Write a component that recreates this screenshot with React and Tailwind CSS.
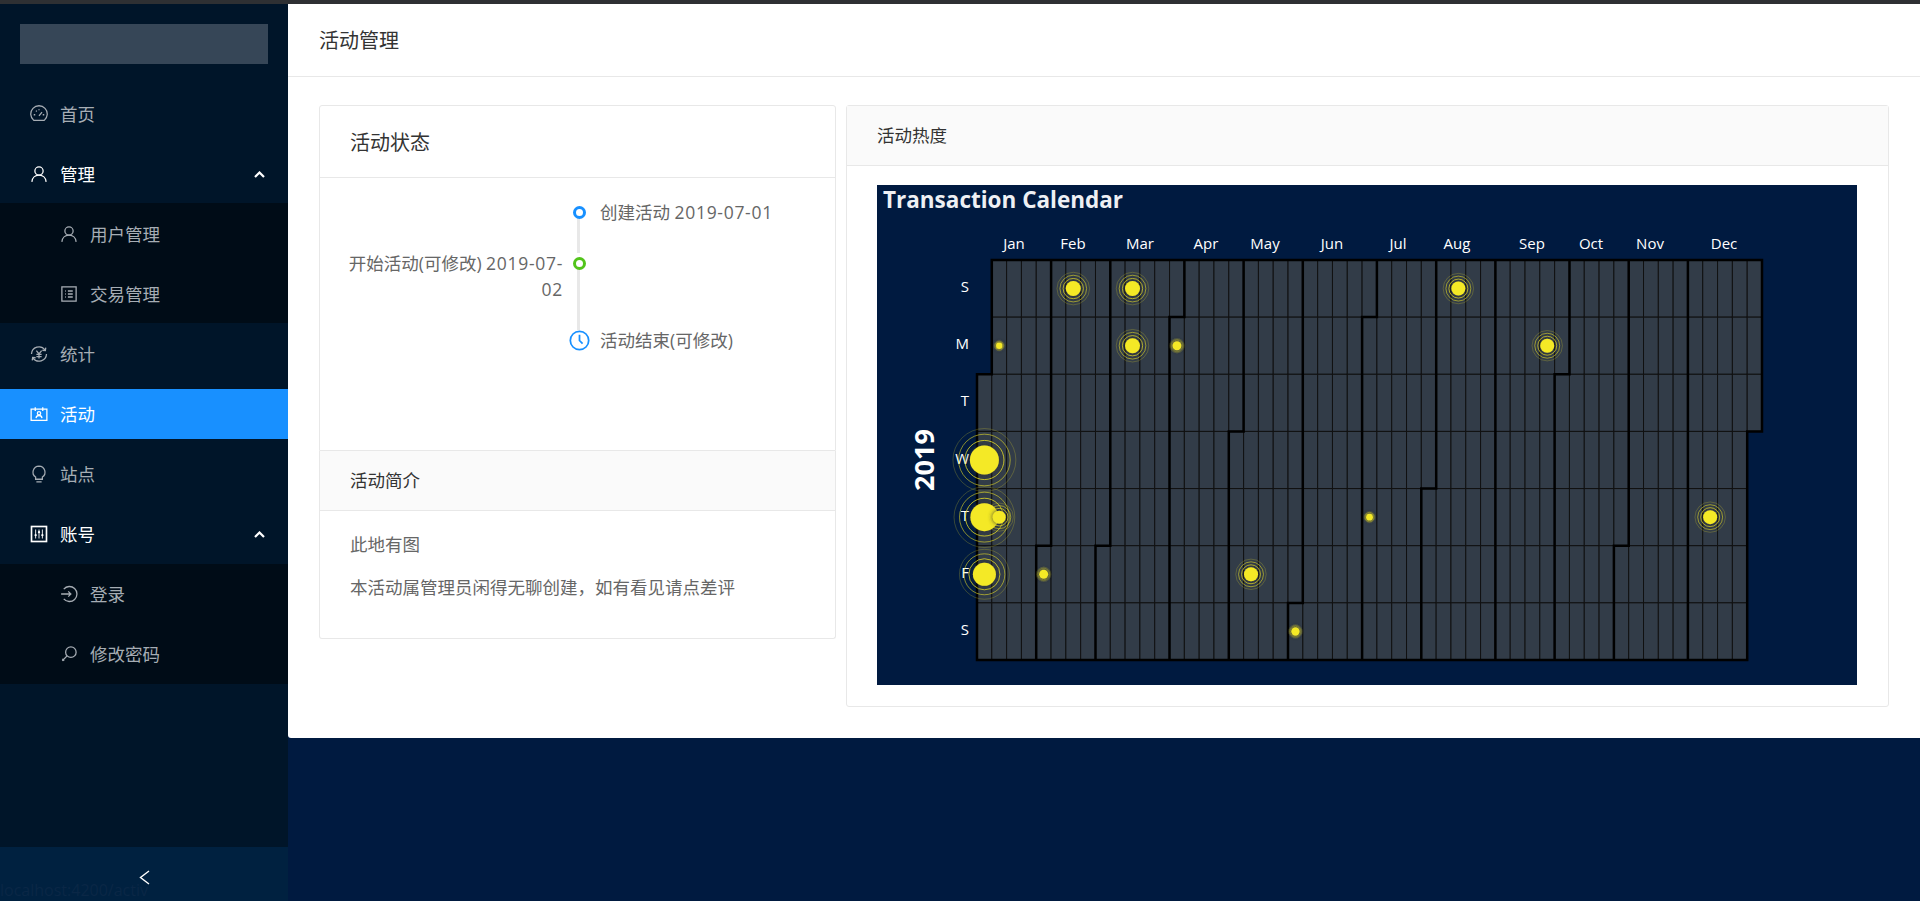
import React from 'react';

const FONT = "font-['Open_Sans','Noto_Sans_CJK_SC',sans-serif]";

const Icon = ({ children, size = 18 }) => (
  <svg
    width={size}
    height={size}
    viewBox="0 0 24 24"
    fill="none"
    stroke="currentColor"
    strokeWidth="1.7"
    className="shrink-0"
  >
    {children}
  </svg>
);

const icons = {
  dashboard: (
    <>
      <path d="M5 20.5A11 11 0 1 1 19 20.5Z" />
      <path d="M12 14.5l4-5M5 13h2M17 13h2M8 7.5l1 1.2M12 5.5v1.5" />
    </>
  ),
  user: (
    <>
      <circle cx="12" cy="8" r="5.5" />
      <path d="M2.5 22.5c.4-5.5 4.4-9 9.5-9s9.100 3.500 9.500 9" />
    </>
  ),
  profile: (
    <>
      <rect x="2.500" y="2.500" width="19" height="19" />
      <path d="M10.500 8h6.500M10.500 12h6.500M10.500 16h6.500M7 8h1M7 12h1M7 16h1" />
    </>
  ),
  transaction: (
    <>
      <path d="M2 12A10 10 0 0 1 20 6.500M22 12A10 10 0 0 1 4 17.500" />
      <path d="M16.500 7l4 .5.5-4M7.500 17l-4-.5-.5 4" />
      <path d="M8.500 7.500L12 12l3.500-4.500M12 12v6M8.500 12.500h7M8.500 15.500h7" />
    </>
  ),
  contacts: (
    <>
      <rect x="1.500" y="5.500" width="21" height="15" />
      <path d="M7 3v5M17 3v5" />
      <circle cx="12" cy="11" r="2.200" />
      <path d="M8 17.500c.3-2.200 2-3.500 4-3.500s3.700 1.300 4 3.500" />
    </>
  ),
  bulb: (
    <>
      <path d="M12 1.500a8 8 0 0 0-4.500 14.600V19h9v-2.900A8 8 0 0 0 12 1.500z" />
      <path d="M8.500 22.500h7" />
    </>
  ),
  control: (
    <>
      <rect x="2" y="2" width="20" height="20" strokeWidth="2.200" />
      <path d="M7.500 6v12M12 6v12M16.500 6v12" strokeWidth="1.200" />
      <circle cx="7.500" cy="13.500" r="1.500" fill="currentColor" stroke="none" />
      <circle cx="12" cy="9.500" r="1.500" fill="currentColor" stroke="none" />
      <circle cx="16.500" cy="13.500" r="1.500" fill="currentColor" stroke="none" />
    </>
  ),
  login: (
    <>
      <path d="M5 5.500a10 10 0 1 1 0 13" />
      <path d="M1.500 12h13M11 8.500l3.500 3.500-3.500 3.500" />
    </>
  ),
  key: (
    <>
      <circle cx="14.500" cy="9.500" r="7" />
      <path d="M9.500 14.500L3 21M3 18.500l2.500 2.500" />
    </>
  ),
};

const ChevronUp = () => (
  <svg width="11" height="7" viewBox="0 0 11 7" fill="none" stroke="currentColor" strokeWidth="2.200" className="ml-auto mr-[23px]">
    <path d="M1 6l4.500-4.500L10 6" />
  </svg>
);

const MenuItem = ({ icon, label, active, open, sub, chevron, className = '' }) => (
  <div
    className={`h-[50px] flex items-center ${sub ? 'pl-[60px]' : 'pl-[30px]'} ${
      active ? 'bg-[#1890ff] text-white' : open ? 'text-white' : 'text-[#a6adb4]'
    } ${className}`}
  >
    <Icon>{icons[icon]}</Icon>
    <span className="ml-[12px] text-[17.5px] leading-[26px]">{label}</span>
    {chevron && <ChevronUp />}
  </div>
);

const Sidebar = () => (
  <aside className="w-[288px] shrink-0 bg-[#001529] flex flex-col">
    <div className="mt-[20px] mx-[20px] h-[40px] bg-[#364657]" />
    <nav className="mt-[25px] flex flex-col">
      <MenuItem icon="dashboard" label="首页" />
      <MenuItem icon="user" label="管理" open chevron className="mt-[10px]" />
      <div className="mt-[4px] bg-[#000c17] pt-[6px] pb-[4px] flex flex-col gap-[10px]">
        <MenuItem icon="user" label="用户管理" sub />
        <MenuItem icon="profile" label="交易管理" sub />
      </div>
      <MenuItem icon="transaction" label="统计" className="mt-[6px]" />
      <MenuItem icon="contacts" label="活动" active className="mt-[10px]" />
      <MenuItem icon="bulb" label="站点" className="mt-[10px]" />
      <MenuItem icon="control" label="账号" open chevron className="mt-[10px]" />
      <div className="mt-[5px] bg-[#000c17] pt-[5px] pb-[5px] flex flex-col gap-[10px]">
        <MenuItem icon="login" label="登录" sub />
        <MenuItem icon="key" label="修改密码" sub />
      </div>
    </nav>
    <div className="mt-auto h-[54px] bg-[#002140] flex items-start justify-center text-white pt-[23px]">
      <svg width="11" height="15" viewBox="0 0 11 15" fill="none" stroke="currentColor" strokeWidth="1.400">
        <path d="M10 1L1.500 7.500 10 14" />
      </svg>
    </div>
  </aside>
);

const TimelineItem = ({ left, right, dot, tail, pb = true }) => (
  <div className={`flex text-[17.5px] leading-[26px] text-[#666] ${pb ? 'pb-[25px]' : ''}`}>
    <div className="w-[217px] text-right shrink-0">{left}</div>
    <div className="w-[32px] shrink-0 relative flex justify-center">
      {tail && <div className="absolute left-[14px] top-[18px] bottom-[-28px] w-[3px] bg-[#e8e8e8]" />}
      <div className="relative">{dot}</div>
    </div>
    <div className="pl-[5px]">{right}</div>
  </div>
);

const Dot = ({ color }) => (
  <div className={`mt-[7px] w-[13px] h-[13px] rounded-full border-[3px] bg-white ${color}`} />
);

const ClockDot = () => (
  <svg width="21" height="21" viewBox="0 0 24 24" fill="none" stroke="#1890ff" strokeWidth="2" className="mt-[3px] bg-white">
    <circle cx="12" cy="12" r="10.500" />
    <path d="M12 5.500V12l3.500 3.500" />
  </svg>
);

const DateText = ({ children }) => <span className="tracking-[0.7px]">{children}</span>;

// echarts-like calendar, coordinates are page pixels (see viewBox)
const X0 = 977;
const Y0 = 260;
const CW = 785 / 53;
const CH = 400 / 7;

const days = [];
for (let i = 0; i < 365; i++) {
  const d = new Date(Date.UTC(2019, 0, 1 + i));
  days.push({ col: Math.floor((i + 2) / 7), row: (i + 2) % 7, month: d.getUTCMonth() });
}

const monthAt = {};
days.forEach((d) => {
  monthAt[`${d.col}-${d.row}`] = d.month;
});

const buildMonthLines = () => {
  let path = '';
  const line = (c1, r1, c2, r2) => {
    path += `M${(X0 + c1 * CW).toFixed(1)} ${(Y0 + r1 * CH).toFixed(1)}L${(X0 + c2 * CW).toFixed(1)} ${(Y0 + r2 * CH).toFixed(1)}`;
  };
  days.forEach(({ col, row, month }) => {
    if (monthAt[`${col + 1}-${row}`] !== month) line(col + 1, row, col + 1, row + 1);
    if (monthAt[`${col - 1}-${row}`] === undefined) line(col, row, col, row + 1);
    if (monthAt[`${col}-${row + 1}`] !== month) line(col, row + 1, col + 1, row + 1);
    if (monthAt[`${col}-${row - 1}`] === undefined) line(col, row, col + 1, row);
  });
  return path;
};

const monthLabels = [
  ['Jan', 1014], ['Feb', 1073], ['Mar', 1140], ['Apr', 1206], ['May', 1265], ['Jun', 1332],
  ['Jul', 1398], ['Aug', 1457], ['Sep', 1532], ['Oct', 1591], ['Nov', 1650], ['Dec', 1724],
];

const weekLabels = ['S', 'M', 'T', 'W', 'T', 'F', 'S'];

const points = [
  [6, 0, 7.5], [10, 0, 7.5], [32, 0, 7], [1, 1, 3.2], [10, 1, 7.5], [13, 1, 4.5], [38, 1, 7],
  [0, 3, 14.5], [0, 4, 14], [1, 4, 6.5], [26, 4, 3.4], [49, 4, 7], [0, 5, 11.5], [4, 5, 4.5], [18, 5, 7], [21, 6, 4.2],
];

const CalendarChart = () => (
  <svg viewBox="877 185 980 500" width="980" height="500" className="block bg-[#001a40]">
    <defs>
      <filter id="glow" x="-100%" y="-100%" width="300%" height="300%">
        <feDropShadow dx="0" dy="0" stdDeviation="2.500" floodColor="#333" />
      </filter>
    </defs>
    <text x="883" y="208" fill="#eef0f4" fontSize="22.500" fontWeight="700">Transaction Calendar</text>
    {monthLabels.map(([m, x]) => (
      <text key={m} x={x} y="249" fill="#fff" fontSize="15" textAnchor="middle">{m}</text>
    ))}
    {days.map((d, i) => (
      <rect
        key={i}
        x={X0 + d.col * CW}
        y={Y0 + d.row * CH}
        width={CW}
        height={CH}
        fill="#323c48"
        stroke="#111"
        strokeWidth="1"
      />
    ))}
    <path d={buildMonthLines()} fill="none" stroke="#000" strokeWidth="2.500" strokeLinecap="square" />
    {weekLabels.map((w, i) => (
      <text key={i} x="969" y={Y0 + (i + 0.5) * CH + 3.5} fill="#fff" fontSize="15" textAnchor="end">{w}</text>
    ))}
    <text
      x="0"
      y="0"
      transform="translate(934 460) rotate(-90)"
      fill="#fff"
      fontSize="27"
      fontWeight="700"
      textAnchor="middle"
    >
      2019
    </text>
    {points.map(([col, row, r], i) => {
      const cx = X0 + (col + 0.5) * CW;
      const cy = Y0 + (row + 0.5) * CH;
      const small = r < 5;
      const rings = small ? [1.2, 1.4, 1.6] : [1.35, 1.78, 2.17];
      const width = small ? 0.7 : 1;
      return (
        <g key={i}>
          <circle cx={cx} cy={cy} r={r * rings[0]} fill="none" stroke="#f4e925" strokeOpacity="0.75" strokeWidth={width} />
          <circle cx={cx} cy={cy} r={r * rings[1]} fill="none" stroke="#f4e925" strokeOpacity="0.55" strokeWidth={width} />
          <circle cx={cx} cy={cy} r={r * rings[2]} fill="none" stroke="#f4e925" strokeOpacity="0.22" strokeWidth={width} />
          <circle cx={cx} cy={cy} r={r} fill="#f4e925" filter="url(#glow)" />
        </g>
      );
    })}
  </svg>
);

export default function App() {
  return (
    <div className={`${FONT} relative h-[901px] overflow-hidden flex flex-col bg-[#001a40]`}>
      <div className="h-[4px] bg-[#2e3033] shrink-0" />
      <div className="flex flex-1 min-h-0">
        <Sidebar />
        <main className="flex-1 min-w-0">
          <div className="h-[734px] bg-white rounded-bl-[3px] flex flex-col">
            <div className="h-[73px] border-b border-[#e8e8e8] pl-[31px] pt-[2px] flex items-center text-[20px] text-[#333] shrink-0">
              活动管理
            </div>
            <div className="flex gap-[10px] pl-[31px] pt-[28px]">
              <div className="w-[517px] shrink-0 flex flex-col">
                <div className="h-[346px] border border-[#e8e8e8] rounded-t-[3px] flex flex-col">
                  <div className="h-[72px] shrink-0 border-b border-[#e8e8e8] pl-[30px] pt-[3px] flex items-center text-[20px] text-[#333]">
                    活动状态
                  </div>
                  <div className="pt-[21px] pl-[26px]">
                    <TimelineItem
                      right={<>创建活动 <DateText>2019-07-01</DateText></>}
                      dot={<Dot color="border-[#1890ff]" />}
                      tail
                    />
                    <TimelineItem
                      left={<>开始活动(可修改) <DateText>2019-07-02</DateText></>}
                      dot={<Dot color="border-[#52c41a]" />}
                      tail
                    />
                    <TimelineItem right="活动结束(可修改)" dot={<ClockDot />} pb={false} />
                  </div>
                </div>
                <div className="h-[188px] border border-t-0 border-[#e8e8e8] rounded-b-[3px] flex flex-col">
                  <div className="h-[60px] shrink-0 bg-[#fafafa] border-b border-[#e8e8e8] pl-[30px] flex items-center text-[17.5px] text-[#333]">
                    活动简介
                  </div>
                  <div className="pl-[30px] pt-[20px] text-[17.5px] leading-[26px] text-[#666]">
                    <p>此地有图</p>
                    <p className="mt-[17px]">本活动属管理员闲得无聊创建，如有看见请点差评</p>
                  </div>
                </div>
              </div>
              <div className="w-[1043px] shrink-0 h-[602px] border border-[#e8e8e8] rounded-[3px] flex flex-col">
                <div className="h-[60px] shrink-0 bg-[#fafafa] border-b border-[#e8e8e8] pl-[30px] flex items-center text-[17.5px] text-[#333]">
                  活动热度
                </div>
                <div className="pl-[30px] pt-[19px]">
                  <CalendarChart />
                </div>
              </div>
            </div>
          </div>
        </main>
      </div>
      <div className="absolute left-0 bottom-[1px] text-[16px] leading-[20px] text-[#0a2746]">localhost:4200/activ</div>
    </div>
  );
}
